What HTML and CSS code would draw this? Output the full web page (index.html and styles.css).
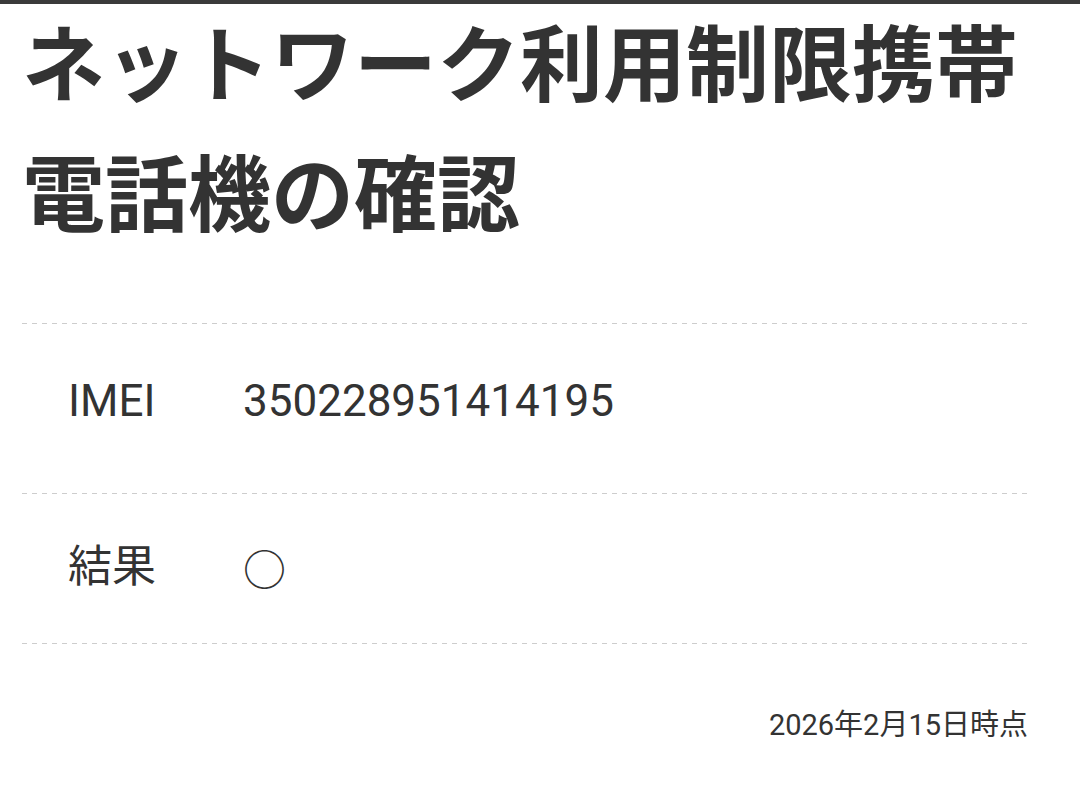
FILE: index.html
```html
<!DOCTYPE html>
<html lang="ja">
<head>
<meta charset="utf-8">
<title>ネットワーク利用制限携帯電話機の確認</title>
<link rel="stylesheet" href="styles.css">
</head>
<body>
<div class="topbar"></div>
<main class="page">
  <h1 class="title">ネットワーク利用制限携帯電話機の確認</h1>
  <dl class="result-table">
    <div class="row row-imei">
      <dt class="label">IMEI</dt>
      <dd class="value">350228951414195</dd>
    </div>
    <div class="row row-result">
      <dt class="label">結果</dt>
      <dd class="value mark">○</dd>
    </div>
  </dl>
  <p class="timestamp">2026年2月15日時点</p>
</main>
</body>
</html>
```

FILE: styles.css
```css
html, body {
  margin: 0;
  padding: 0;
  background: #ffffff;
}
body {
  font-family: Roboto, "Noto Sans CJK JP", "Noto Sans", sans-serif;
  color: #333333;
}
.topbar {
  height: 4px;
  background: #3a3a3a;
}
.page {
  padding: 0 50px 0 22px;
}
.title {
  margin: -10px 0 0 0;
  font-family: "Noto Sans CJK JP", sans-serif;
  font-weight: 700;
  font-size: 83px;
  line-height: 130px;
  color: #333333;
  margin-bottom: 69px;
}
.result-table {
  margin: 0;
  padding-top: 1px;
  background-image: repeating-linear-gradient(90deg, #cdcdcd 0 5px, transparent 5px 10px);
  background-size: 100% 1px;
  background-repeat: no-repeat;
  background-position: left top;
}
.row {
  display: grid;
  grid-template-columns: 175px 1fr;
  padding-left: 46px;
  align-items: center;
  box-sizing: border-box;
  background-image: repeating-linear-gradient(90deg, #cdcdcd 0 5px, transparent 5px 10px);
  background-size: 100% 1px;
  background-repeat: no-repeat;
  background-position: left bottom;
}
.row-imei {
  height: 170px;
  padding-bottom: 16px;
}
.row-result {
  height: 150px;
  padding-bottom: 4px;
}
.label, .value {
  margin: 0;
  font-size: 44px;
  line-height: 56px;
  color: #333333;
}
.mark {
  font-family: "Noto Sans CJK JP", sans-serif;
  font-size: 43px;
}
.timestamp {
  margin: 61px 0 0 0;
  text-align: right;
  font-size: 29px;
  line-height: 40px;
  color: #333333;
  padding-right: 2px;
}
```
